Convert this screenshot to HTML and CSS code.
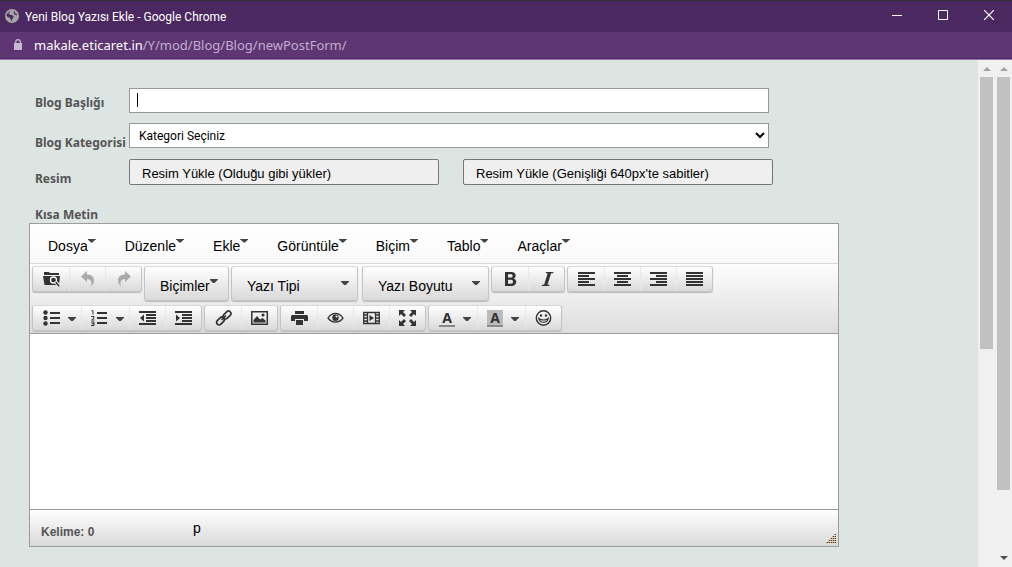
FILE: index.html
```html
<!DOCTYPE html>
<html lang="tr">
<head>
<meta charset="utf-8">
<title>Yeni Blog Yazısı Ekle</title>
<link rel="stylesheet" href="styles.css">
</head>
<body>
<header class="titlebar">
  <svg class="globe" viewBox="0 0 14 14" width="14" height="14" aria-hidden="true"><circle cx="7" cy="7" r="7" fill="#a6a6a6"/><path d="M7.500 1.500C5 2 4 3.200 4.200 4.800 5 6.500 8 5.800 8.600 7.500c.2 1.200-1 1.500-1.200 2.500L6.500 12.300C5.500 11 6 9.500 4.800 8.800 3.500 8.200 2.500 8 1.500 7c0-2.500 2.500-5.200 6-5.500z" fill="#4b285f"/><path d="M9.500 2.500c-.8 1 .5 1.500.2 2.300.8.800 1.500.2 2.300 1" fill="none" stroke="#4b285f" stroke-width="1.200"/><path d="M3.500 4.500c1.500-.5 3 .3 4-1.500" fill="none" stroke="#a6a6a6"/></svg>
  <span class="title">Yeni Blog Yazısı Ekle - Google Chrome</span>
  <div class="window-controls">
    <button type="button" aria-label="Simge durumuna küçült"><svg viewBox="0 0 10 10" width="10" height="10"><path d="M0 5.500H10" stroke="#fff"/></svg></button>
    <button type="button" aria-label="Ekranı kapla"><svg viewBox="0 0 10 10" width="10" height="10"><path d="M.5.500h9v9h-9z" fill="none" stroke="#fff"/></svg></button>
    <button type="button" aria-label="Kapat"><svg viewBox="0 0 10 10" width="10" height="10"><path d="M0 0 10 10M10 0 0 10" stroke="#fff" stroke-width="1.200"/></svg></button>
  </div>
</header>
<div class="addressbar">
  <svg viewBox="0 0 8 11" width="8" height="11" aria-hidden="true"><path d="M0 4h8v7H0z" fill="#c4bccb"/><path d="M1.700 4.500V3a2.300 2.300 0 0 1 4.600 0v1.500" fill="none" stroke="#c4bccb" stroke-width="1.200"/></svg>
  <span class="url"><span class="host">makale.eticaret.in</span>/Y/mod/Blog/Blog/newPostForm/</span>
</div>
<div class="viewport">
  <main class="page">
    <form class="post-form">
      <div class="row row-text">
        <label for="title">Blog Başlığı</label>
        <div class="field"><input id="title" type="text"><span class="text-cursor"></span></div>
      </div>
      <div class="row row-text">
        <label for="category">Blog Kategorisi</label>
        <div class="field"><select id="category"><option>Kategori Seçiniz</option></select></div>
      </div>
      <div class="row row-upload">
        <span class="label">Resim</span>
        <div class="uploads">
          <button type="button">Resim Yükle (Olduğu gibi yükler)</button>
          <button type="button">Resim Yükle (Genişliği 640px'te sabitler)</button>
        </div>
      </div>
      <div class="row row-heading"><label for="content">Kısa Metin</label></div>

      <div class="editor">
        <nav class="menubar">
          <button type="button">Dosya<i class="caret"></i></button>
          <button type="button">Düzenle<i class="caret"></i></button>
          <button type="button">Ekle<i class="caret"></i></button>
          <button type="button">Görüntüle<i class="caret"></i></button>
          <button type="button">Biçim<i class="caret"></i></button>
          <button type="button">Tablo<i class="caret"></i></button>
          <button type="button">Araçlar<i class="caret"></i></button>
        </nav>
        <div class="toolbars">
          <div class="toolbar">
            <div class="group">
              <button type="button" aria-label="Dosya yöneticisi"><svg viewBox="0 0 18 16"><path d="M1 1h5l1 1h9v2H1z"/><path d="M0 5h17l-1 9H1.500z"/><circle cx="10.500" cy="9" r="3" fill="#333" stroke="#fff" stroke-width="1.300"/><path d="m12.800 11.200 3.700 4" stroke="#fff" stroke-width="3.200"/><path d="m12.800 11.200 3.400 4" stroke="#333" stroke-width="1.700"/></svg></button>
              <button type="button" disabled aria-label="Geri al"><svg viewBox="0 0 18 16"><path d="M2 5.500 8 0v3.500c5 0 7 3 7 6 0 2.500-1.200 4.500-3 5.500 1.500-4-.5-7-4-7v3z"/></svg></button>
              <button type="button" disabled aria-label="Yinele"><svg viewBox="0 0 18 16"><path d="M16 5.500 10 0v3.500c-5 0-7 3-7 6 0 2.500 1.200 4.500 3 5.500-1.500-4 .5-7 4-7v3z"/></svg></button>
            </div>
            <button type="button" class="listbox formats">Biçimler<i class="caret"></i></button>
            <button type="button" class="listbox wide">Yazı Tipi<i class="caret"></i></button>
            <button type="button" class="listbox wide last">Yazı Boyutu<i class="caret"></i></button>
            <div class="group">
              <button type="button" aria-label="Kalın"><svg viewBox="0 0 18 16"><path fill-rule="evenodd" d="M3 1h6.500c2.600 0 4.200 1.300 4.200 3.500 0 1.500-.8 2.500-2 3 1.500.4 2.500 1.600 2.500 3.300 0 2.600-1.800 4.200-4.700 4.200H3zm3 2.200v3.400h2.700c1.200 0 1.900-.6 1.900-1.700s-.7-1.700-1.900-1.700zm0 5.500v4h3c1.300 0 2-.8 2-2s-.7-2-2-2z"/></svg></button>
              <button type="button" aria-label="İtalik"><svg viewBox="0 0 18 16"><path d="M8 1h7.500l-.4 1.300h-2L9.500 13.700h2L11.200 15H3.700l.4-1.300h2L9.700 2.300h-2z"/></svg></button>
            </div>
            <div class="group">
              <button type="button" aria-label="Sola hizala"><svg viewBox="0 0 18 16"><path d="M0 1h17v2H0zm0 3h11v2H0zm0 3h17v2H0zm0 3h11v2H0zm0 3h17v2H0z"/></svg></button>
              <button type="button" aria-label="Ortala"><svg viewBox="0 0 18 16"><path d="M0 1h17v2H0zm3 3h11v2H3zM0 7h17v2H0zm3 3h11v2H3zm-3 3h17v2H0z"/></svg></button>
              <button type="button" aria-label="Sağa hizala"><svg viewBox="0 0 18 16"><path d="M0 1h17v2H0zm6 3h11v2H6zM0 7h17v2H0zm6 3h11v2H6zm-6 3h17v2H0z"/></svg></button>
              <button type="button" aria-label="İki yana yasla"><svg viewBox="0 0 18 16"><path d="M0 1h17v2H0zm0 3h17v2H0zm0 3h17v2H0zm0 3h17v2H0zm0 3h17v2H0z"/></svg></button>
            </div>
          </div>
          <div class="toolbar">
            <div class="group">
              <button type="button" class="split" aria-label="Sırasız liste"><svg viewBox="0 0 18 16"><circle cx="2.500" cy="2.500" r="2.200"/><circle cx="2.500" cy="8" r="2.200"/><circle cx="2.500" cy="13.500" r="2.200"/><path d="M7 2h10v2H7zm0 5h10v2H7zm0 5h10v2H7z"/></svg><i class="caret"></i></button>
              <button type="button" class="split" aria-label="Sıralı liste"><svg viewBox="0 0 18 16"><path d="M6 2h10v2H6zm0 5h10v2H6zm0 5h10v2H6z"/><path d="M.5.700H2V4.500M0 6.500h3v1.500L.7 10H3.500M0 12h3v3.500H0M.8 13.700H3" fill="none" stroke="#333"/></svg><i class="caret"></i></button>
              <button type="button" aria-label="Girintiyi azalt"><svg viewBox="0 0 18 16"><path d="M0 1h17v2H0zm7 3h10v2H7zm0 3h10v2H7zm0 3h10v2H7zm-7 3h17v2H0zM5 4.500v7L1 8z"/></svg></button>
              <button type="button" aria-label="Girintiyi artır"><svg viewBox="0 0 18 16"><path d="M0 1h17v2H0zm7 3h10v2H7zm0 3h10v2H7zm0 3h10v2H7zm-7 3h17v2H0zM1 4.500v7L5 8z"/></svg></button>
            </div>
            <div class="group">
              <button type="button" aria-label="Bağlantı"><svg viewBox="0 0 18 16"><g fill="none" stroke="#333" stroke-width="1.700"><rect x="7.500" y="2.500" width="9" height="5" rx="2.500" transform="rotate(-45 12 5)"/><rect x="1" y="8.500" width="9" height="5" rx="2.500" transform="rotate(-45 5.500 11)"/><path d="m6.500 10 4.500-4.500"/></g></svg></button>
              <button type="button" aria-label="Resim"><svg viewBox="0 0 18 16"><path fill="none" stroke="#333" stroke-width="1.500" d="M.8 1.800h15.500v12.500H.8z"/><path d="M2.500 12.500V10l3.500-4 3 3.500 2.500-1.500 3 2.500v2z"/><circle cx="12" cy="5" r="1.600"/></svg></button>
            </div>
            <div class="group">
              <button type="button" aria-label="Yazdır"><svg viewBox="0 0 18 16"><path d="M4 1h9v3H4zM1 5h15l1 1v5h-4V9H4v2H0V6zM5 10h7v5H5z"/></svg></button>
              <button type="button" aria-label="Önizleme"><svg viewBox="0 0 18 16"><path fill="none" stroke="#333" stroke-width="1.300" d="M1 8c4-6 11-6 15 0-4 5.500-11 5.500-15 0z"/><circle cx="8.500" cy="7.700" r="3.200"/><circle cx="9.500" cy="6.500" r="1" fill="#fff"/></svg></button>
              <button type="button" aria-label="Medya"><svg viewBox="0 0 18 16"><path fill="none" stroke="#333" d="M.7 2.500h15.600v11H.7zM4.500 2v12M12.500 2v12M1 5h3M1 8h3M1 11h3M13 5h3M13 8h3M13 11h3" stroke-width="1.300"/><path d="m6.500 5 4.500 3-4.500 3z"/></svg></button>
              <button type="button" aria-label="Tam ekran"><svg viewBox="0 0 18 16"><path d="M0 0h6L4 2l3 3-2 2-3-3-2 2zM17 0h-6l2 2-3 3 2 2 3-3 2 2zM0 16h6l-2-2 3-3-2-2-3 3-2-2zM17 16h-6l2-2-3-3 2-2 3 3 2-2z"/></svg></button>
            </div>
            <div class="group">
              <button type="button" class="split" aria-label="Metin rengi"><span class="swatch">A</span><i class="caret"></i></button>
              <button type="button" class="split" aria-label="Arka plan rengi"><span class="swatch filled">A</span><i class="caret"></i></button>
              <button type="button" aria-label="İfadeler"><svg viewBox="0 0 18 16"><circle cx="8.500" cy="8" r="7.200" fill="none" stroke="#333" stroke-width="1.400"/><circle cx="6" cy="5.500" r="1.200"/><circle cx="11" cy="5.500" r="1.200"/><path d="M3.800 8.500c1 5 8.400 5 9.400 0-2 2-7.400 2-9.400 0z" fill="none" stroke="#333" stroke-width="1.200"/></svg></button>
            </div>
          </div>
        </div>
        <textarea id="content" class="content"></textarea>
        <footer class="statusbar">
          <span class="words">Kelime: 0</span>
          <span class="path">p</span>
          <svg class="grip" viewBox="0 0 10 10" width="10" height="10" aria-hidden="true"><path d="M8 .5h2M6 2.500h4M4 4.500h6M2 6.500h8M0 8.500h10" stroke="#d9a441"/><path d="M9 .5h1M7 2.500h3M5 4.500h5M3 6.500h7M1 8.500h9" stroke="#333" stroke-dasharray="1 1"/></svg>
        </footer>
      </div>
    </form>
  </main>
  <div class="scrollbar inner">
    <svg viewBox="0 0 8 4" width="8" height="4"><path d="M0 4 4 0l4 4z" fill="#a3a3a3"/></svg>
    <div class="thumb"></div>
  </div>
  <div class="scrollbar outer">
    <svg viewBox="0 0 8 4" width="8" height="4"><path d="M0 4 4 0l4 4z" fill="#a3a3a3"/></svg>
    <div class="thumb"></div>
    <svg class="down" viewBox="0 0 8 4" width="8" height="4"><path d="m0 0 4 4 4-4z" fill="#505050"/></svg>
  </div>
</div>
</body>
</html>
```

FILE: styles.css
```css
* { box-sizing: border-box; }

body {
  margin: 0;
  height: 100vh;
  display: flex;
  flex-direction: column;
  overflow: hidden;
  background: #dde5e3;
  font-family: "Liberation Sans", Arial, sans-serif;
}

button { font: inherit; color: inherit; margin: 0; padding: 0; border: 0; background: none; }

.titlebar {
  height: 32px;
  flex: none;
  display: flex;
  align-items: center;
  gap: 6px;
  padding-left: 5px;
  background: #4b285f;
  border-top: 1px solid #33293b;
  color: #fff;
  font: 12px Roboto, "Open Sans", sans-serif;
}
.globe { margin-bottom: 2px; }
.window-controls { margin-left: auto; display: flex; height: 100%; }
.window-controls button { width: 46px; padding-bottom: 3px; display: flex; align-items: center; justify-content: center; }

.addressbar {
  height: 28px;
  flex: none;
  display: flex;
  align-items: center;
  gap: 12px;
  padding: 0 0 2px 14px;
  background: #5d3673;
  border-bottom: 1px solid #9a74b0;
  box-shadow: inset 0 -1px #4f2b63;
  color: #c3add0;
  font: 13px "Noto Sans", "Open Sans", sans-serif;
}
.host { color: #fff; }

.viewport { flex: 1; min-height: 0; display: flex; }
.page { flex: 1; min-width: 0; overflow: hidden; padding: 28px 29px 0; }
.post-form { max-width: 810px; }

.row { display: flex; color: #555; font: bold 12px/16px "Noto Sans", "Open Sans", sans-serif; }
.row label, .row .label { flex: none; width: 100px; padding-left: 6px; white-space: nowrap; }
.row-text { height: 35px; }
.row-text label { padding-top: 7px; }
.row-text + .row-text label { padding-top: 12px; }
.field { position: relative; flex: 1; max-width: 640px; }
.field input, .field select {
  display: block;
  width: 100%;
  height: 25px;
  border: 1px solid #999;
  border-radius: 0;
  outline: 0;
  background-color: #fff;
  color: #000;
  font: 12px Roboto, "Open Sans", sans-serif;
}
.field input { padding: 0 8px; }
.field select { padding: 0 0 0 5px; }
.text-cursor { position: absolute; left: 8px; top: 5px; width: 1px; height: 14px; background: #000; }

.row-upload { height: 48px; padding-top: 1px; }
.row-upload .label { padding-top: 12px; }
.uploads { flex: 1; display: flex; gap: 24px; }
.uploads button {
  flex: 1;
  max-width: 310px;
  height: 26px;
  padding: 4px 0 0 12px;
  border: 1px solid #767676;
  border-radius: 2px;
  background: #efefef;
  color: #000;
  text-align: left;
  font: 13px/16px "Liberation Sans", Arial, sans-serif;
}
.row-heading { height: 17px; padding-top: 1px; }

.editor { border: 1px solid #9b9b9b; background: #fff; color: #000; font-size: 14px; line-height: 16px; }

.menubar {
  height: 40px;
  display: flex;
  align-items: center;
  gap: 29px;
  padding: 4px 18px 0;
  background: linear-gradient(#fff, #f9f9f9);
  border-bottom: 1px solid #d9d9d9;
}
.menubar button { display: flex; }
.menubar .caret { margin-top: 1px; }

.caret { flex: none; width: 8px; height: 4px; background: #444; clip-path: polygon(0 0, 100% 0, 100% 20%, 60% 100%, 40% 100%, 0 20%); }

.toolbars {
  display: flex;
  flex-direction: column;
  gap: 4px;
  padding: 2px;
  background: linear-gradient(#fdfdfd, #ddd);
  border-bottom: 1px solid #9b9b9b;
}
.toolbar { display: flex; align-items: flex-start; gap: 2px; }
.group, .listbox {
  border: 1px solid #c4c4c4;
  border-top-color: #d8d8d8;
  border-radius: 3px;
  background: linear-gradient(#fff, #d9d9d9);
  box-shadow: 0 1px 1px #bbb;
}
.group { display: flex; height: 26px; }
.group button { width: 36px; padding-left: 2px; display: flex; align-items: center; justify-content: center; }
.group button + button { box-shadow: inset 1px 0 #e8e8e8; }
.group .split { width: 48px; justify-content: flex-start; gap: 7px; padding-left: 10px; }
.group .split .caret { margin-top: 2px; }
.group svg { width: 18px; height: 16px; fill: #333; }
.group button:disabled svg { fill: #aaa; }

.listbox { height: 35px; display: flex; padding: 11px 8px 0 15px; }
.listbox .caret { margin-top: 1px; }
.listbox.formats { width: 85px; }
.listbox.wide { width: 127px; justify-content: space-between; }
.listbox.wide .caret { margin-top: 3px; }
.listbox.last { margin-left: 2px; }

.swatch {
  width: 16px;
  height: 17px;
  margin-right: 1px;
  border-bottom: 2px solid #888;
  color: #333;
  text-align: center;
  font: bold 14px/15px "Noto Sans", "Open Sans", sans-serif;
}
.swatch.filled { background: #bbb; }

.content { display: block; width: 100%; height: 175px; padding: 8px; border: 0; outline: 0; resize: none; background: #fff; }

.statusbar {
  height: 37px;
  display: flex;
  padding: 0 2px 2px 11px;
  border-top: 1px solid #9b9b9b;
  background: linear-gradient(#fff, #d9d9d9);
}
.words { width: 152px; padding-top: 14px; color: #555; font-weight: bold; font-size: 12px; line-height: 16px; }
.path { padding-top: 10px; }
.grip { margin-left: auto; align-self: flex-end; }

.scrollbar {
  flex: none;
  width: 17px;
  display: flex;
  flex-direction: column;
  align-items: center;
  padding-top: 7px;
  background: #f0f0f0;
}
.scrollbar svg { flex: none; }
.thumb { width: 13px; margin-top: 6px; background: #c1c1c1; }
.inner .thumb { height: 272px; }
.outer .thumb { height: 413px; }
.down { margin: auto 0 7px; }
```
